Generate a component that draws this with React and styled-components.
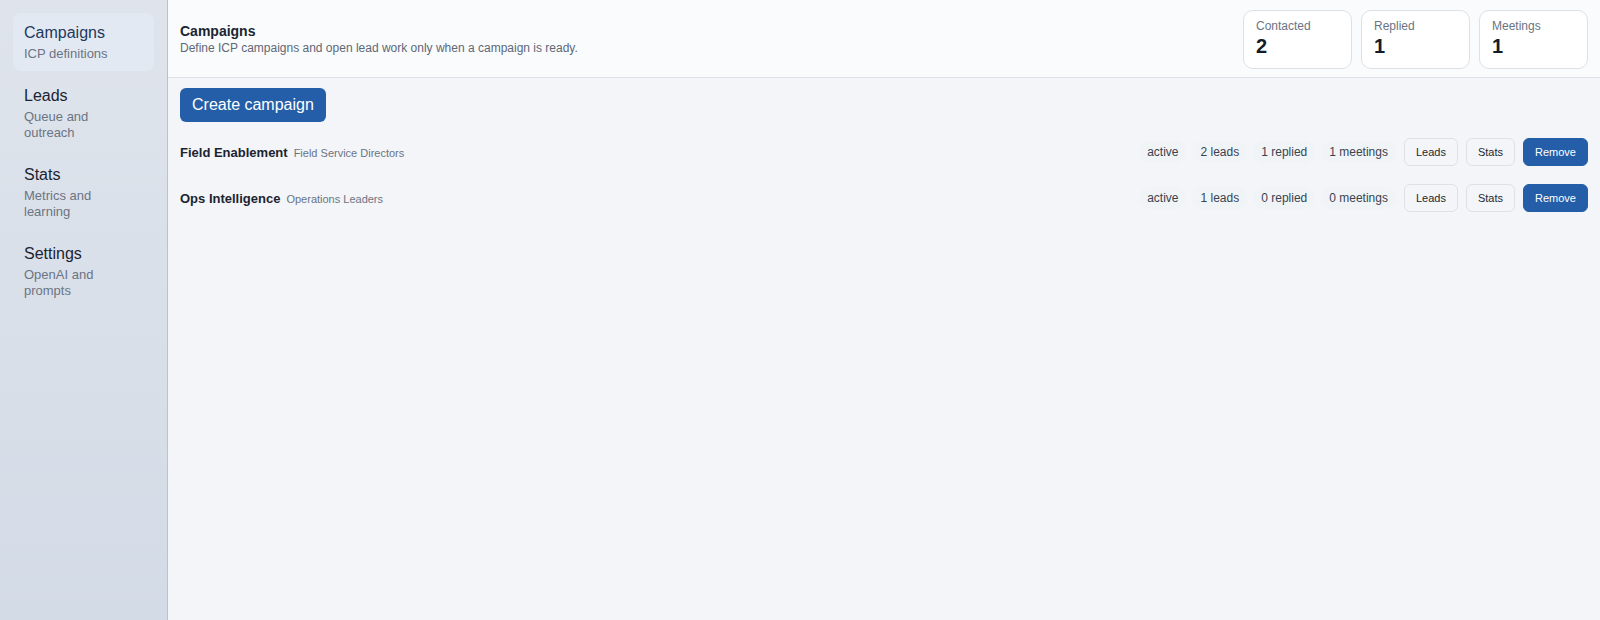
import React from 'react';
import styled, { createGlobalStyle } from 'styled-components';

const GlobalStyle = createGlobalStyle`
	html, body, #root {
		height: 100%;
	}
	body {
		margin: 0;
		font-family: "Liberation Sans", Arial, sans-serif;
		color: #1b2430;
		background: #f3f5f8;
	}
	* {
		box-sizing: border-box;
	}
`;

const navItems = [
	{ id: 'campaigns', title: 'Campaigns', sub: 'ICP definitions' },
	{ id: 'leads', title: 'Leads', sub: 'Queue and outreach' },
	{ id: 'stats', title: 'Stats', sub: 'Metrics and learning' },
	{ id: 'settings', title: 'Settings', sub: 'OpenAI and prompts' },
];

const stats = [
	{ label: 'Contacted', value: 2 },
	{ label: 'Replied', value: 1 },
	{ label: 'Meetings', value: 1 },
];

const campaigns = [
	{ id: 1, name: 'Field Enablement', persona: 'Field Service Directors', status: 'active', leads: 2, replied: 1, meetings: 1 },
	{ id: 2, name: 'Ops Intelligence', persona: 'Operations Leaders', status: 'active', leads: 1, replied: 0, meetings: 0 },
];

const App = () => {
	const active = 'campaigns';

	return (
		<Layout>
			<GlobalStyle />
			<Sidebar>
				{navItems.map((item) => (
					<NavItem key={item.id} $active={item.id === active}>
						<NavTitle $active={item.id === active}>{item.title}</NavTitle>
						<NavSub>{item.sub}</NavSub>
					</NavItem>
				))}
			</Sidebar>
			<Main>
				<Header>
					<HeaderText>
						<h1>Campaigns</h1>
						<p>Define ICP campaigns and open lead work only when a campaign is ready.</p>
					</HeaderText>
					<StatCards>
						{stats.map((s) => (
							<StatCard key={s.label}>
								<span>{s.label}</span>
								<strong>{s.value}</strong>
							</StatCard>
						))}
					</StatCards>
				</Header>
				<Content>
					<div>
						<PrimaryButton>Create campaign</PrimaryButton>
					</div>
					<CampaignList>
						{campaigns.map((c) => (
							<CampaignRow key={c.id}>
								<CampaignName>
									<strong>{c.name}</strong>
									<span>{c.persona}</span>
								</CampaignName>
								<RowActions>
									<Pill>{c.status}</Pill>
									<Pill>{c.leads} leads</Pill>
									<Pill>{c.replied} replied</Pill>
									<Pill>{c.meetings} meetings</Pill>
									<SmallButton>Leads</SmallButton>
									<SmallButton>Stats</SmallButton>
									<SmallButton $primary>Remove</SmallButton>
								</RowActions>
							</CampaignRow>
						))}
					</CampaignList>
				</Content>
			</Main>
		</Layout>
	);
};

export default App;

const Layout = styled.div`
	display: flex;
	min-height: 100vh;
`;

const Sidebar = styled.nav`
	width: 168px;
	flex-shrink: 0;
	padding: 13px;
	display: flex;
	flex-direction: column;
	gap: 5px;
	background: linear-gradient(180deg, #dfe4ec 0%, #d3dbe6 100%);
	border-right: 1px solid #b9c3d0;
`;

const NavItem = styled.div`
	padding: 10px 11px 9px;
	border-radius: 8px;
	background: ${(p) => (p.$active ? '#e3e9f3' : 'transparent')};
	cursor: pointer;
`;

const NavTitle = styled.div`
	font-size: 16px;
	line-height: 20px;
	color: ${(p) => (p.$active ? '#1e3a5c' : '#1b2430')};
	margin-bottom: 3px;
`;

const NavSub = styled.div`
	max-width: 108px;
	font-size: 13px;
	line-height: 16px;
	color: #6b7483;
`;

const Main = styled.main`
	flex: 1;
	display: flex;
	flex-direction: column;
	min-width: 0;
`;

const Header = styled.header`
	display: flex;
	align-items: center;
	justify-content: space-between;
	padding: 10px 12px 8px;
	background: #f9fbfc;
	border-bottom: 1px solid #dde2e8;
`;

const HeaderText = styled.div`
	> h1 {
		margin: 0;
		font-size: 14px;
		line-height: 17px;
		font-weight: 700;
		color: #1b2430;
	}

	> p {
		margin: 1px 0 0;
		font-size: 12px;
		line-height: 15px;
		color: #5f6877;
	}
`;

const StatCards = styled.div`
	display: flex;
	gap: 9px;
`;

const StatCard = styled.div`
	width: 109px;
	height: 59px;
	padding: 8px 12px;
	background: #ffffff;
	border: 1px solid #dde1e7;
	border-radius: 10px;
	display: flex;
	flex-direction: column;

	> span {
		font-size: 12px;
		line-height: 15px;
		color: #6b7483;
	}

	> strong {
		font-size: 20px;
		line-height: 24px;
		font-weight: 700;
		color: #151c26;
	}
`;

const Content = styled.section`
	padding: 10px 12px;
	display: flex;
	flex-direction: column;
	gap: 16px;
`;

const PrimaryButton = styled.button`
	height: 34px;
	padding: 0 12px;
	border: none;
	border-radius: 6px;
	background: #245ea8;
	color: #ffffff;
	font-family: inherit;
	font-size: 16px;
	cursor: pointer;
`;

const CampaignList = styled.div`
	display: flex;
	flex-direction: column;
	gap: 18px;
`;

const CampaignRow = styled.div`
	display: flex;
	align-items: center;
	justify-content: space-between;
	height: 28px;
`;

const CampaignName = styled.div`
	display: flex;
	align-items: baseline;
	gap: 6px;

	> strong {
		font-size: 13px;
		font-weight: 700;
		color: #1b2430;
	}

	> span {
		font-size: 11px;
		color: #6b7483;
	}
`;

const RowActions = styled.div`
	display: flex;
	align-items: center;
	gap: 6px;
`;

const Pill = styled.span`
	padding: 4px 8px;
	border-radius: 999px;
	background: #f1f4f7;
	font-size: 12px;
	color: #3a4350;
`;

const SmallButton = styled.button`
	height: 28px;
	padding: 0 11px;
	margin-left: 2px;
	border-radius: 6px;
	border: 1px solid ${(p) => (p.$primary ? '#245ea8' : '#dde2e8')};
	background: ${(p) => (p.$primary ? '#245ea8' : '#f3f5f8')};
	color: ${(p) => (p.$primary ? '#ffffff' : '#1f2833')};
	font-family: inherit;
	font-size: 11px;
	cursor: pointer;
`;
